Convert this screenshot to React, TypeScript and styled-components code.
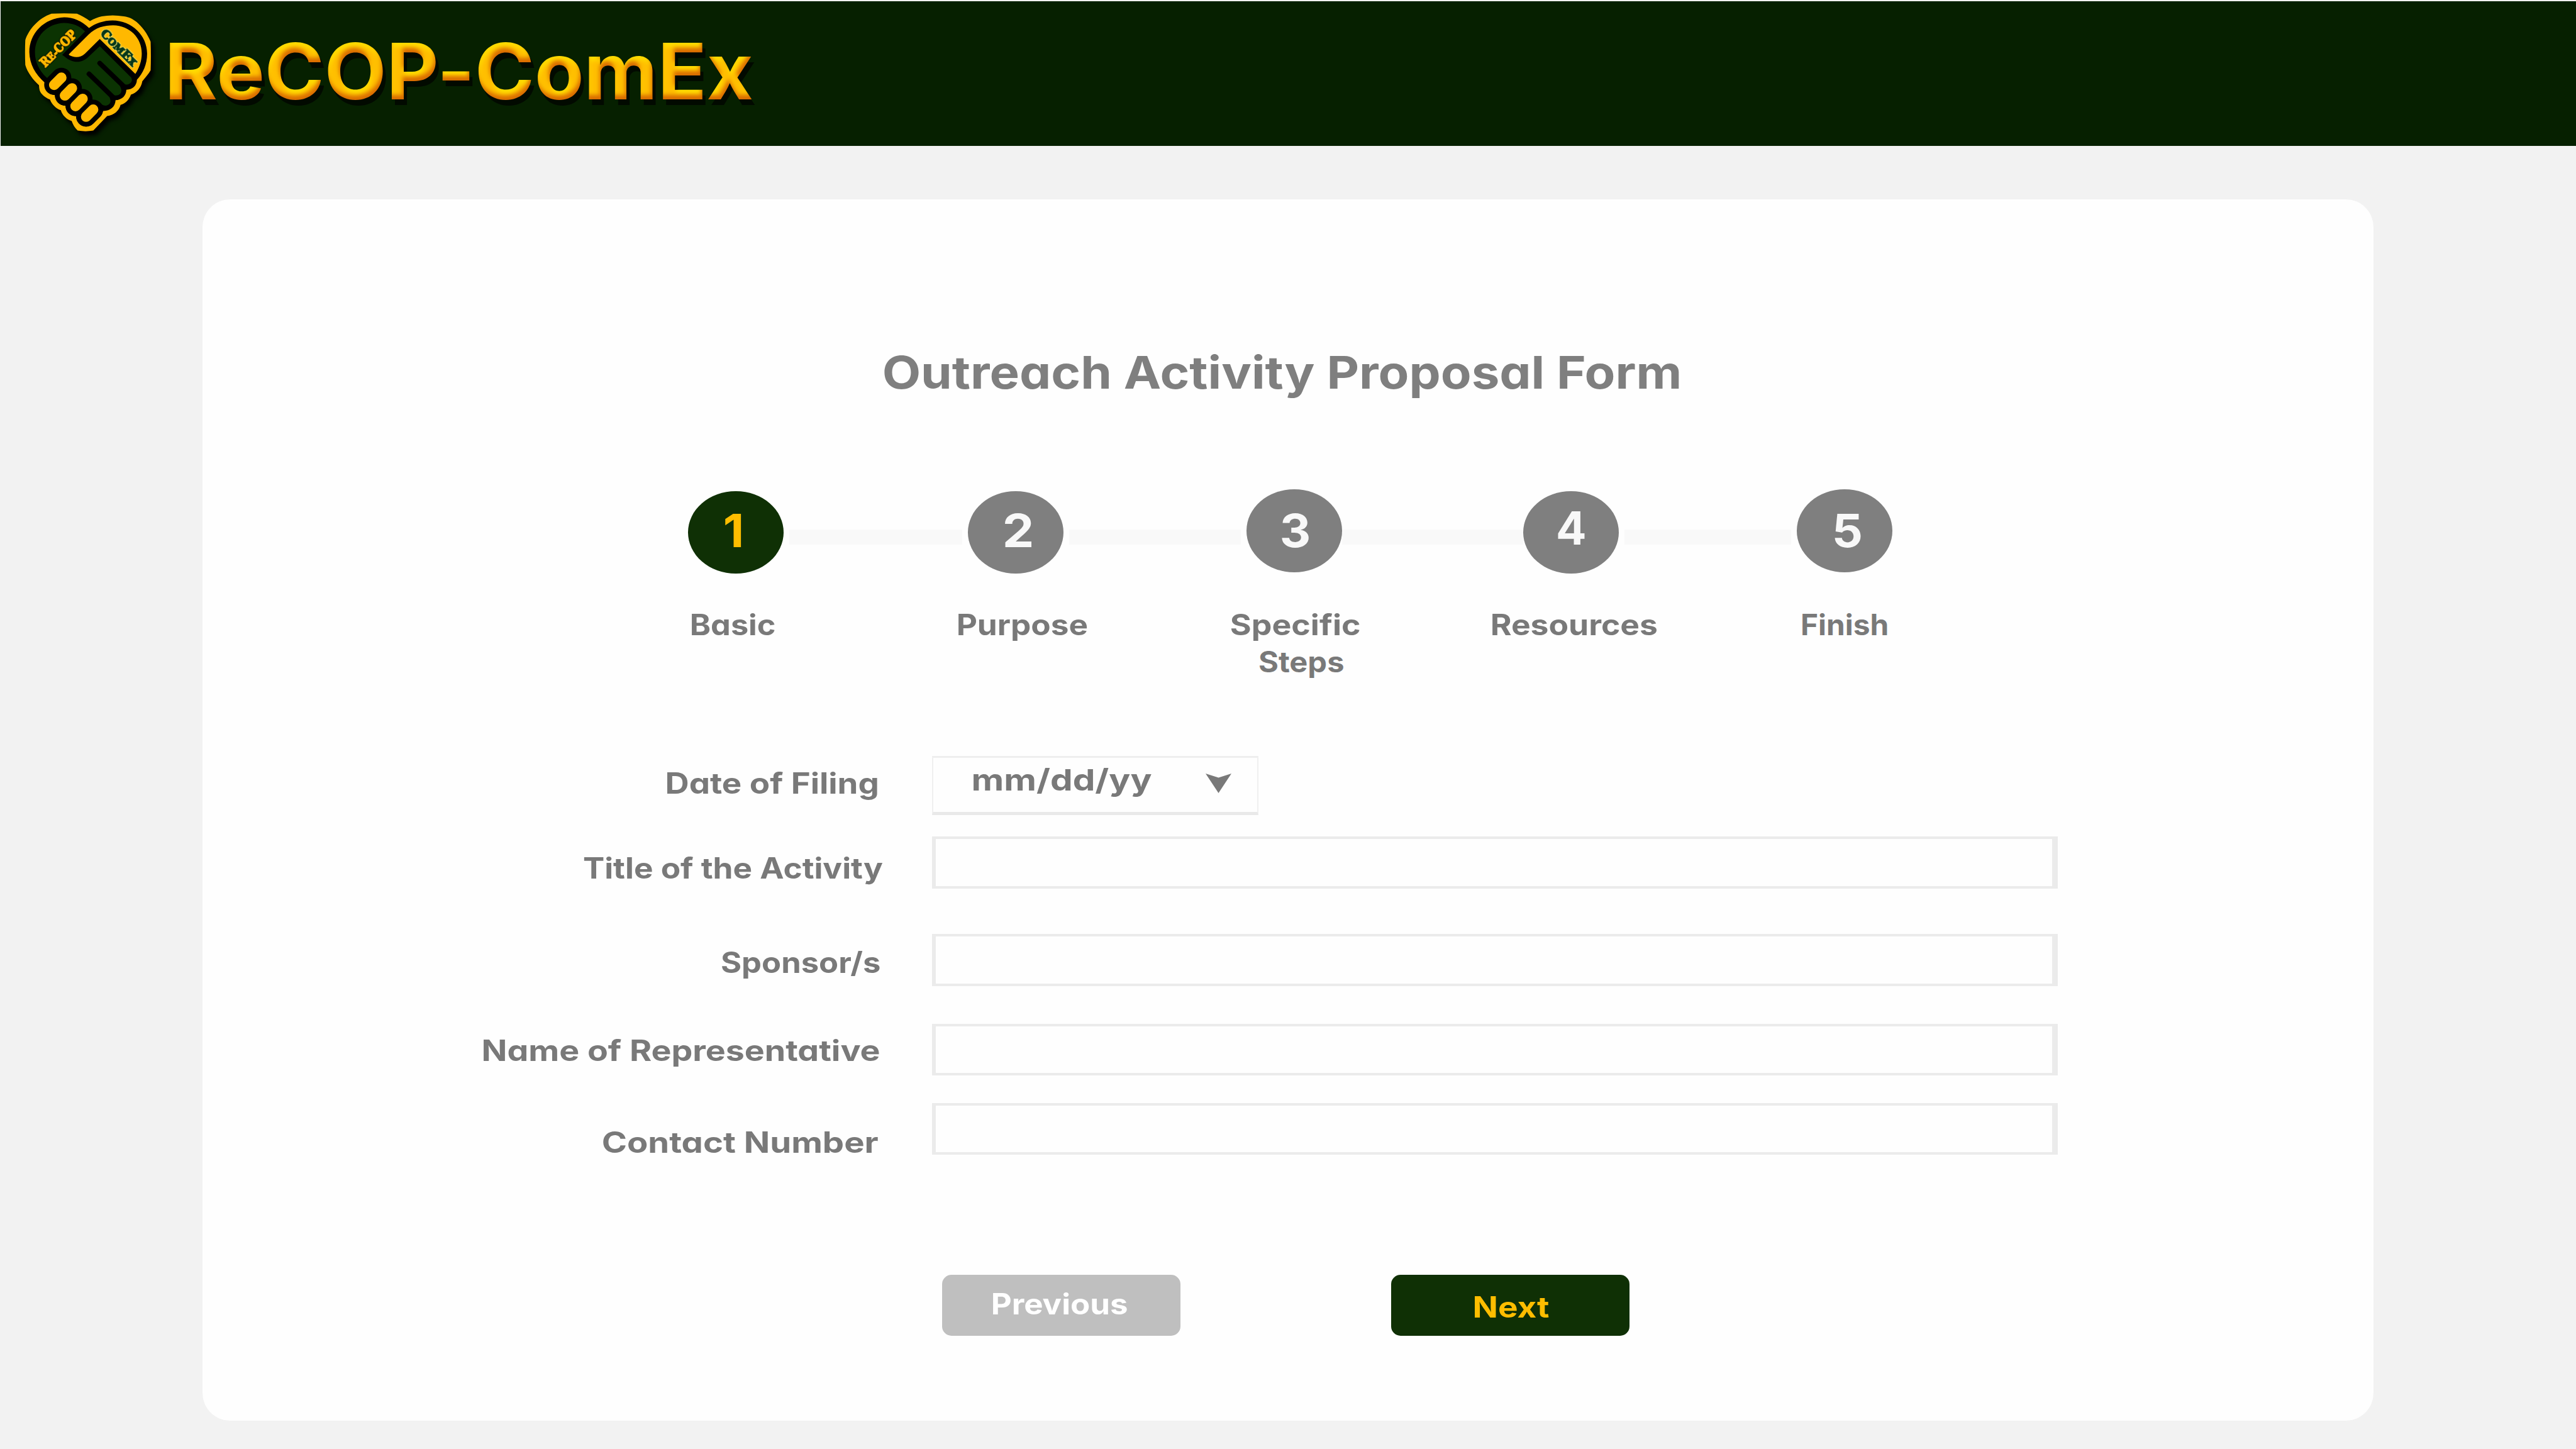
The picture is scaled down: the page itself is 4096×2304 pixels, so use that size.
import React, { useLayoutEffect, useRef, useState } from "react";
import styled, { createGlobalStyle } from "styled-components";

const GlobalStyle = createGlobalStyle`
  * { box-sizing: border-box; }
  html, body { margin: 0; padding: 0; background: #f2f2f2; }
  body { font-family: Inter, "Liberation Sans", sans-serif; overflow: hidden; }
`;

const colors = {
  header: "#062000",
  green: "#0f3005",
  gold: "#ffbd00",
  grey: "#7f7f7f",
  label: "#797979",
  line: "#ebebeb",
};

/* ---------- text stretched to an exact width ---------- */

const Fit = styled.span<{ $w: number; $size: number; $h: number; $weight: number; $color: string }>`
  display: block;
  flex: none;
  width: ${(p) => p.$w}px;
  height: ${(p) => p.$h}px;
  line-height: ${(p) => p.$h}px;
  font-size: ${(p) => p.$size}px;
  font-weight: ${(p) => p.$weight};
  font-feature-settings: "cv11" 1, "calt" 0;
  color: ${(p) => p.$color};
  text-align: left;
  white-space: nowrap;
`;

const FitInner = styled.span`
  display: inline-block;
  transform-origin: 0 50%;
`;

type WideTextProps = {
  children: string;
  width: number;
  size?: number;
  height?: number;
  weight?: number;
  color?: string;
};

function WideText({ children, width, size = 46, height = 60, weight = 650, color = colors.label }: WideTextProps) {
  const ref = useRef<HTMLSpanElement>(null);
  const [transform, setTransform] = useState("none");
  useLayoutEffect(() => {
    const el = ref.current;
    const ctx = document.createElement("canvas").getContext("2d");
    if (!el || !ctx) return;
    ctx.font = `${weight} ${size}px Inter, "Liberation Sans", sans-serif`;
    const m = ctx.measureText(children);
    const left = -m.actualBoundingBoxLeft;
    const right = m.width - m.actualBoundingBoxRight;
    const scale = width / (el.offsetWidth - left - right);
    setTransform(`translateX(${-left * scale}px) scaleX(${scale})`);
  }, [children, width, size, weight]);
  return (
    <Fit $w={width} $size={size} $h={height} $weight={weight} $color={color}>
      <FitInner ref={ref} style={{ transform }}>
        {children}
      </FitInner>
    </Fit>
  );
}

/* ---------- page shell ---------- */

const Page = styled.div`
  width: 4096px;
  height: 2304px;
  display: flex;
  flex-direction: column;
  background: #f2f2f2;
  padding: 2px 0 0 1px;
`;

const Header = styled.header`
  flex: none;
  height: 230px;
  background: ${colors.header};
  display: flex;
  align-items: flex-start;
  padding: 17px 0 0 37px;
`;

const Logo = styled.svg`
  display: block;
  flex: none;
  width: 205px;
  height: 198.4px;
  overflow: visible;
  filter: drop-shadow(5px 7px 3px #000);
`;

const Brand = styled.h1`
  margin: 18.5px 0 0 26.5px;
  filter: url(#bevel) drop-shadow(5px 9px 0 #020a00);
`;

const BevelDefs = styled.svg`
  position: absolute;
  width: 0;
  height: 0;
`;

const Card = styled.main`
  flex: none;
  margin: 85px 0 0 321px;
  width: 3452px;
  height: 1942.4px;
  border-radius: 44px;
  background: #fefefe;
  padding-top: 230.4px;
`;

const Title = styled.h2`
  margin: 0 0 0 1083.5px;
`;

/* ---------- stepper ---------- */

const Stepper = styled.ol`
  list-style: none;
  margin: 141px 0 0 772px;
  padding: 0;
  height: 423.6px;
  display: flex;
  align-items: flex-start;
`;

const Step = styled.li<{ $drop: number }>`
  flex: none;
  width: 151.6px;
  padding-top: ${(p) => p.$drop}px;
`;

const Disc = styled.div<{ $active: boolean; $left: number; $top: number }>`
  width: 151.6px;
  height: 131.4px;
  border-radius: 50%;
  background: ${(p) => (p.$active ? colors.green : colors.grey)};
  padding: ${(p) => p.$top}px 0 0 ${(p) => p.$left}px;
`;

const StepLabel = styled.div<{ $shift: number; $gap: number }>`
  margin: ${(p) => p.$gap}px 0 0 ${(p) => p.$shift}px;
`;

const StepLine = styled.div<{ $inset: number }>`
  margin: 0 ${(p) => p.$inset}px;
  height: 24px;
  background: #f9f9f9;
`;

const Connector = styled.li<{ $w: number }>`
  flex: none;
  width: ${(p) => p.$w}px;
  padding-top: 64px;
`;

const LabelLine = styled.div<{ $indent: number }>`
  padding-left: ${(p) => p.$indent}px;
  height: 58.2px;
`;

type StepData = {
  digit: string;
  x: number;
  drop: number;
  digitX: number;
  digitW: number;
  digitY: number;
  labelX: number;
  lines: { text: string; width: number; indent: number }[];
};

const steps: StepData[] = [
  { digit: "1", x: 1094, drop: 2.2, digitX: 1152.6, digitW: 25, digitY: 844.6, labelX: 1100.4, lines: [{ text: "Basic", width: 132.6, indent: 0 }] },
  { digit: "2", x: 1539.4, drop: 2.2, digitX: 1597.4, digitW: 43, digitY: 844.6, labelX: 1523.6, lines: [{ text: "Purpose", width: 204.6, indent: 0 }] },
  {
    digit: "3", x: 1982, drop: 0, digitX: 2037.6, digitW: 43, digitY: 844.6, labelX: 1957.4,
    lines: [{ text: "Specific", width: 205, indent: 0 }, { text: "Steps", width: 135, indent: 44.2 }],
  },
  { digit: "4", x: 2422.2, drop: 2.2, digitX: 2477.5, digitW: 43, digitY: 840.4, labelX: 2373.4, lines: [{ text: "Resources", width: 262.6, indent: 0 }] },
  { digit: "5", x: 2857.2, drop: 0, digitX: 2917, digitW: 42.6, digitY: 844.6, labelX: 2865.8, lines: [{ text: "Finish", width: 134.6, indent: 0 }] },
];

/* ---------- form ---------- */

const Form = styled.form`
  display: block;
  margin: 0;
`;

const Row = styled.div<{ $h: number; $after: number }>`
  display: flex;
  align-items: flex-start;
  height: ${(p) => p.$h}px;
  margin-bottom: ${(p) => p.$after}px;
`;

const RowLabel = styled.label<{ $top: number; $right: number }>`
  flex: none;
  width: 1160.4px;
  display: flex;
  justify-content: flex-end;
  padding: ${(p) => p.$top}px ${(p) => p.$right}px 0 0;
`;

const DateField = styled.div`
  width: 518.4px;
  height: 94px;
  border: 2px solid #f0f0f0;
  border-top: 3px solid #eeeeee;
  border-bottom: 5px solid #e9e9e9;
  display: flex;
  align-items: flex-start;
  padding: 5.5px 0 0 62.5px;
`;

const Caret = styled.svg`
  display: block;
  width: 41px;
  height: 31px;
  margin: 19.5px 0 0 86px;
`;

const TextField = styled.input`
  width: 1789.6px;
  height: 100%;
  padding: 0 20px;
  border: solid ${colors.line};
  border-width: 4px 9px 4px 6px;
  border-radius: 0;
  background: #fefefe;
  outline: none;
  font: 600 46px Inter, sans-serif;
  color: ${colors.label};
`;

const rows = [
  { text: "Title of the Activity", width: 474.6, h: 82.6, after: 72.4, top: 20.3, right: 80 },
  { text: "Sponsor/s", width: 252.6, h: 82.6, after: 60.2, top: 15.2, right: 82.6 },
  { text: "Name of Representative", width: 628.4, h: 82, after: 43.6, top: 12.5, right: 85.4 },
  { text: "Contact Number", width: 437, h: 82, after: 191.6, top: 32.6, right: 86.4 },
];

const Actions = styled.div`
  display: flex;
  gap: 335.6px;
  margin-left: 1176.2px;
`;

const Button = styled.button<{ $primary?: boolean }>`
  width: 378.4px;
  height: 97px;
  border: 0;
  border-radius: 15px;
  background: ${(p) => (p.$primary ? colors.green : "#bfbfbf")};
  display: flex;
  align-items: flex-start;
  padding: ${(p) => (p.$primary ? "20.5px 0 0 133.2px" : "16px 0 0 81px")};
  font-family: inherit;
`;

const LogoText = styled.text<{ $halo: string }>`
  font-family: "DejaVu Serif", serif;
  font-weight: 700;
  stroke-width: 8;
  filter: drop-shadow(0 0 4px ${(p) => p.$halo}) drop-shadow(0 0 3px ${(p) => p.$halo});
`;

const fingers = [
  [405, 634, 459, 580],
  [485, 713, 538, 659],
  [564, 792, 617, 738],
  [643, 871, 696, 818],
];

function HandshakeLogo() {
  return (
    <Logo viewBox="180 90 960 930">
      <path
        fill="#ffb800"
        d="M672 158C640 135 610 118 575 103Q480 97 385 103C290 135 215 220 190 300Q186 390 190 485C205 540 250 600 292 636C293 665 298 685 310 698Q335 728 374 743C388 780 420 812 455 823C465 860 500 895 535 902C545 930 560 955 580 974Q640 984 697 974L800 866C850 862 890 825 900 783C940 770 965 740 977 706C1020 695 1055 655 1062 607C1085 580 1110 550 1124 525Q1128 420 1124 312C1100 250 1060 200 1020 165C990 142 965 128 925 123Q840 108 760 123C730 130 700 142 672 158Z"
      />
      <path
        fill="#000"
        d="M665 210C610 155 545 130 480 130C330 135 220 250 220 390C222 480 265 555 333 615C330 670 365 705 410 710C412 755 445 785 490 790C492 835 525 865 569 867C572 915 605 943 642 943C665 943 685 933 700 918L750 868Q768 848 768 828C820 830 860 800 863 748C910 745 942 715 943 670C990 668 1020 640 1022 595C1068 545 1098 480 1098 400C1098 265 985 155 840 153C775 153 710 175 665 210Z"
      />
      <path
        fill="#0b3302"
        d="M635 235C600 195 540 172 480 172C350 175 262 275 262 390C262 465 295 530 350 580L540 740L693 745C725 745 745 760 762 780C795 802 838 775 822 738L815 715L835 700C860 725 915 710 905 665L895 640L915 618C945 650 1000 620 980 580L745 345L665 420C615 475 540 475 480 420L465 410Z"
      />
      <g stroke="#000" strokeWidth="36" strokeLinecap="round" fill="none">
        <path d="M665 552L848 730" />
        <path d="M745 472L925 645" />
      </g>
      <path
        fill="#ffb800"
        d="M515 405L660 260C715 205 780 190 845 190C970 192 1058 285 1058 400C1058 455 1040 505 1010 552L745 292L635 400C600 435 550 432 515 410Z"
      />
      {fingers.map(([x1, y1, x2, y2]) => (
        <path key={x1} d={`M${x1} ${y1}L${x2} ${y2}`} stroke="#000" strokeWidth="148" strokeLinecap="round" />
      ))}
      {fingers.map(([x1, y1, x2, y2]) => (
        <path key={x1} d={`M${x1} ${y1}L${x2} ${y2}`} stroke="#ffb800" strokeWidth="77" strokeLinecap="round" />
      ))}
      <LogoText
        $halo="#000"
        transform="translate(338 506) rotate(-45)"
        textLength="342"
        lengthAdjust="spacingAndGlyphs"
        fill="#ffb800"
        stroke="#ffb800"
      >
        <tspan fontSize="94">R</tspan>
        <tspan fontSize="74">E-</tspan>
        <tspan fontSize="94">COP</tspan>
      </LogoText>
      <LogoText
        $halo="#f4ef7a"
        transform="translate(745 256) rotate(45)"
        textLength="345"
        lengthAdjust="spacingAndGlyphs"
        fill="#06371a"
        stroke="#06371a"
      >
        <tspan fontSize="84">C</tspan>
        <tspan fontSize="68">OM</tspan>
        <tspan fontSize="84">E</tspan>
        <tspan fontSize="68">X</tspan>
      </LogoText>
    </Logo>
  );
}

function Bevel() {
  return (
    <BevelDefs aria-hidden="true">
      <filter id="bevel" x="-5%" y="-20%" width="110%" height="140%" colorInterpolationFilters="sRGB">
        <feOffset in="SourceAlpha" dx="-2" dy="-7" result="up" />
        <feGaussianBlur in="up" stdDeviation="3.4" result="upSoft" />
        <feFlood floodColor="#d96c00" result="dark" />
        <feComposite in="dark" in2="upSoft" operator="out" result="darkEdge" />
        <feOffset in="SourceAlpha" dx="2" dy="7" result="down" />
        <feGaussianBlur in="down" stdDeviation="3.4" result="downSoft" />
        <feFlood floodColor="#ffdb00" result="light" />
        <feComposite in="light" in2="downSoft" operator="out" result="lightEdge" />
        <feMerge result="all">
          <feMergeNode in="SourceGraphic" />
          <feMergeNode in="lightEdge" />
          <feMergeNode in="darkEdge" />
        </feMerge>
        <feComposite in="all" in2="SourceAlpha" operator="in" />
      </filter>
    </BevelDefs>
  );
}

export default function App() {
  return (
    <>
      <GlobalStyle />
      <Bevel />
      <Page>
        <Header>
          <HandshakeLogo />
          <Brand>
            <WideText width={926} size={124} height={150} weight={700} color="#ffbf00">
              ReCOP-ComEx
            </WideText>
          </Brand>
        </Header>
        <Card>
          <Title>
            <WideText width={1264} size={72} height={90} weight={650} color={colors.grey}>
              Outreach Activity Proposal Form
            </WideText>
          </Title>
          <Stepper>
            {steps.map((s, i) => (
              <React.Fragment key={s.digit}>
                <Step $drop={s.drop}>
                  <Disc $active={i === 0} $left={s.digitX - s.x} $top={s.digitY - 45 - 779 - s.drop}>
                    <WideText width={s.digitW} size={73} height={90} weight={700} color={i === 0 ? colors.gold : "#f8f8f8"}>
                      {s.digit}
                    </WideText>
                  </Disc>
                  <StepLabel $gap={53.6 - s.drop} $shift={s.labelX - s.x}>
                    {s.lines.map((l) => (
                      <LabelLine key={l.text} $indent={l.indent}>
                        <WideText width={l.width}>{l.text}</WideText>
                      </LabelLine>
                    ))}
                  </StepLabel>
                </Step>
                {i < steps.length - 1 && (
                  <Connector $w={steps[i + 1].x - s.x - 151.6}>
                    <StepLine $inset={i === 2 ? 0 : 9} />
                  </Connector>
                )}
              </React.Fragment>
            ))}
          </Stepper>
          <Form>
            <Row $h={94} $after={34.2}>
              <RowLabel $top={12.6} $right={87}>
                <WideText width={334}>Date of Filing</WideText>
              </RowLabel>
              <DateField>
                <WideText width={284} size={47}>
                  mm/dd/yy
                </WideText>
                <Caret viewBox="0 0 41 31">
                  <path d="M0 0L20.5 6.5L41 0L20.5 31Z" fill="#797979" />
                </Caret>
              </DateField>
            </Row>
            {rows.map((r) => (
              <Row key={r.text} $h={r.h} $after={r.after}>
                <RowLabel $top={r.top} $right={r.right}>
                  <WideText width={r.width}>{r.text}</WideText>
                </RowLabel>
                <TextField type="text" aria-label={r.text} />
              </Row>
            ))}
            <Actions>
              <Button type="button">
                <WideText width={214} color="#ffffff">
                  Previous
                </WideText>
              </Button>
              <Button type="button" $primary>
                <WideText width={119} color={colors.gold}>
                  Next
                </WideText>
              </Button>
            </Actions>
          </Form>
        </Card>
      </Page>
    </>
  );
}
